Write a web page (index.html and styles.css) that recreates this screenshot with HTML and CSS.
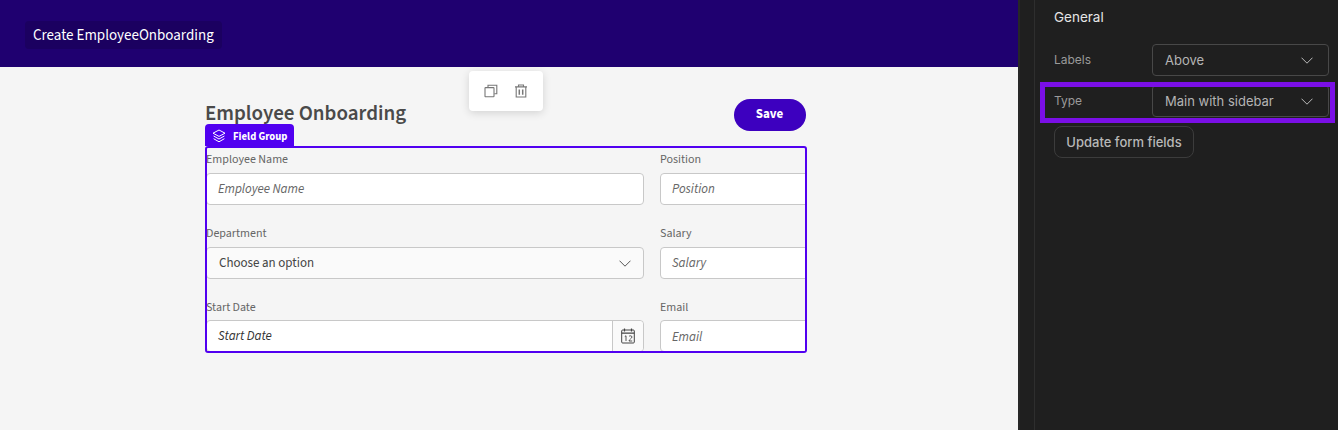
FILE: index.html
```html
<!DOCTYPE html>
<html lang="en">
<head>
<meta charset="utf-8">
<title>Create EmployeeOnboarding</title>
<link rel="stylesheet" href="styles.css">
</head>
<body>
<div class="app">
  <main class="canvas">
    <header class="topbar"><span class="chip">Create EmployeeOnboarding</span></header>
    <div class="toolbar">
      <svg class="tool" viewBox="0 0 14 14" width="14" height="14" fill="none" stroke="#777" stroke-width="1.1"><rect x="1" y="3.6" width="9" height="9.2" rx=".6"/><path d="M4 3.4V1.2h8.8v8.6H10.300"/></svg>
      <svg class="tool" viewBox="0 0 14 14" width="14" height="14" fill="none" stroke="#777" stroke-width="1.1"><path d="M1 2.900h12M4.500 2.700V1h5v1.700M2.200 3v10h9.600V3"/><path d="M5.300 5.500v5.200M8.700 5.500v5.200" stroke-width="1.500"/></svg>
    </div>
    <section class="form">
      <div class="form-head">
        <h1 class="title">Employee Onboarding</h1>
        <button class="save">Save</button>
      </div>
      <div class="group-wrap">
        <div class="group-tag">
          <svg viewBox="0 0 14 14" width="14" height="14" fill="none" stroke="#fff" stroke-width="1" stroke-linejoin="round"><path d="M7 1 13 4.200 7 7.400 1 4.200Z"/><path d="M1.600 7 7 10 12.400 7"/><path d="M1.600 9.700 7 12.800 12.400 9.700"/></svg>
          <span>Field Group</span>
        </div>
        <div class="group">
          <div class="grid">
            <div class="field">
              <label class="label">Employee Name</label>
              <div class="input">Employee Name</div>
            </div>
            <div class="field">
              <label class="label">Position</label>
              <div class="input">Position</div>
            </div>
            <div class="field">
              <label class="label">Department</label>
              <div class="select">
                <span>Choose an option</span>
                <svg viewBox="0 0 12 7" width="12" height="7" fill="none" stroke="#555" stroke-width="1"><path d="M.5.700 6 6.200 11.500.7"/></svg>
              </div>
            </div>
            <div class="field">
              <label class="label">Salary</label>
              <div class="input">Salary</div>
            </div>
            <div class="field field-last">
              <label class="label">Start Date</label>
              <div class="date">
                <span class="date-value">Start Date</span>
                <span class="date-btn">
                  <svg viewBox="0 0 14 16" width="14" height="16" fill="none" stroke="#444" stroke-width="1"><rect x=".7" y="2" width="12.600" height="13" rx="1"/><path d="M.7 5.200h12.600M3.500.5v3M10.500.5v3" stroke-width="1.200"/><path d="M3.800 8.500 5 7.800V13M8 8.500c.4-1 3-1 3 .5 0 1.300-3 2.500-3 4h3.200" stroke-width=".9"/></svg>
                </span>
              </div>
            </div>
            <div class="field field-last">
              <label class="label">Email</label>
              <div class="input">Email</div>
            </div>
          </div>
        </div>
      </div>
    </section>
  </main>
  <aside class="panel">
    <div class="rail"></div>
    <div class="panel-body">
      <h2 class="panel-title">General</h2>
      <div class="row">
        <span class="row-label">Labels</span>
        <div class="dd"><span>Above</span><svg viewBox="0 0 12 7" width="12" height="7" fill="none" stroke="#bbb" stroke-width="1"><path d="M.5.700 6 6.200 11.500.7"/></svg></div>
      </div>
      <div class="row row-second">
        <span class="row-label">Type</span>
        <div class="dd"><span>Main with sidebar</span><svg viewBox="0 0 12 7" width="12" height="7" fill="none" stroke="#bbb" stroke-width="1"><path d="M.5.700 6 6.200 11.500.7"/></svg></div>
      </div>
      <button class="update">Update form fields</button>
    </div>
    <div class="highlight"></div>
  </aside>
</div>
</body>
</html>
```

FILE: styles.css
```css
* { box-sizing: border-box; }
html, body { margin: 0; height: 100%; overflow: hidden; }
body { font-family: "Source Sans 3", "Noto Sans", sans-serif; background: #f5f5f5; }
.app { display: flex; height: 430px; width: 1338px; }

.canvas { position: relative; width: 1018px; flex: none; background: #f5f5f5; }
.topbar { height: 67px; background: #1f0070; padding: 21px 25px 0; display: flex; align-items: flex-start; }
.chip { height: 28px; line-height: 28px; padding: 1px 8px 0; background: #1b0060; border-radius: 4px; color: #fff; font-size: 15px; white-space: nowrap; }

.toolbar { position: absolute; left: 469px; top: 71px; width: 74px; height: 40px; background: #fff; border-radius: 4px; box-shadow: 0 2px 8px rgba(0,0,0,.14); display: flex; align-items: center; justify-content: center; gap: 16px; }
.tool { display: block; }

.form { width: 602px; margin: 32px 0 0 205px; }
.form-head { display: flex; justify-content: space-between; align-items: flex-start; height: 47px; }
.title { margin: 0; font-size: 21px; line-height: 28px; font-weight: 600; color: #4a4a4a; white-space: nowrap; }
.save { width: 72px; height: 32px; margin-right: 1px; padding: 0 1px 3px 0; border: 0; border-radius: 16px; background: #3d00bf; color: #fff; font: 700 13px "Source Sans 3", "Noto Sans", sans-serif; }

.group-wrap { position: relative; }
.group-tag { position: absolute; left: 0; top: -22px; height: 22px; width: 89px; padding: 2px 0 0 7px; background: #5100f0; border-radius: 4px 4px 0 0; color: #fff; font-size: 10.700px; font-weight: 700; display: flex; align-items: center; gap: 7px; white-space: nowrap; }
.group { height: 207px; border: 2px solid #5100f0; border-radius: 3px; overflow: hidden; }
.grid { display: grid; grid-template-columns: 438px 150px; column-gap: 16px; row-gap: 20px; margin-left: -1px; padding-top: 4px; }
.field { display: flex; flex-direction: column; height: 54px; }
.field-last .label { height: 20px; }
.field-last .input { padding-top: 1px; }
.label { height: 21px; line-height: 16px; font-size: 12px; color: #666; white-space: nowrap; }
.input, .select, .date { height: 32px; border: 1px solid #c8c8c8; border-radius: 4px; background: #fff; font-size: 13px; color: #666; display: flex; align-items: center; padding: 0 11px; }
.input { font-style: italic; }
.select { background: #fafafa; color: #444; justify-content: space-between; padding: 0 12px; }
.date { padding: 0; font-style: italic; color: #333; }
.date-value { flex: 1; padding-left: 11px; }
.date-btn { width: 31px; height: 100%; border-left: 1px solid #c8c8c8; background: #fafafa; border-radius: 0 4px 4px 0; display: flex; align-items: center; justify-content: center; }

.panel { position: relative; flex: 1; background: #1f1f1f; display: flex; font-family: Inter, sans-serif; }
.rail { width: 17px; flex: none; border-left: 2px solid #272727; border-right: 1px solid #2e2e2e; }
.panel-body { flex: 1; padding: 0 0 0 19px; }
.panel-title { margin: 0; padding-top: 9px; height: 44px; font-size: 13.500px; line-height: 17px; font-weight: 400; color: #e6e6e6; }
.row { display: flex; align-items: center; }
.row-second { margin-top: 9px; }
.row-label { width: 98px; padding-bottom: 2px; font-size: 12px; color: #9a9a9a; }
.dd { width: 177px; height: 32px; border: 1px solid #484848; border-radius: 4px; background: #1f1f1f; color: #b4b4b4; font-size: 13px; display: flex; align-items: center; justify-content: space-between; padding: 0 15px 0 12px; }
.update { display: block; margin-top: 9px; width: 140px; height: 32px; border: 1px solid #3c3c3c; border-radius: 8px; background: #1f1f1f; color: #b8b8b8; font: 500 13px Inter, sans-serif; padding: 0; }
.highlight { position: absolute; left: 22px; top: 82px; width: 295px; height: 41px; border: 5px solid #7a0fe6; pointer-events: none; }
```
